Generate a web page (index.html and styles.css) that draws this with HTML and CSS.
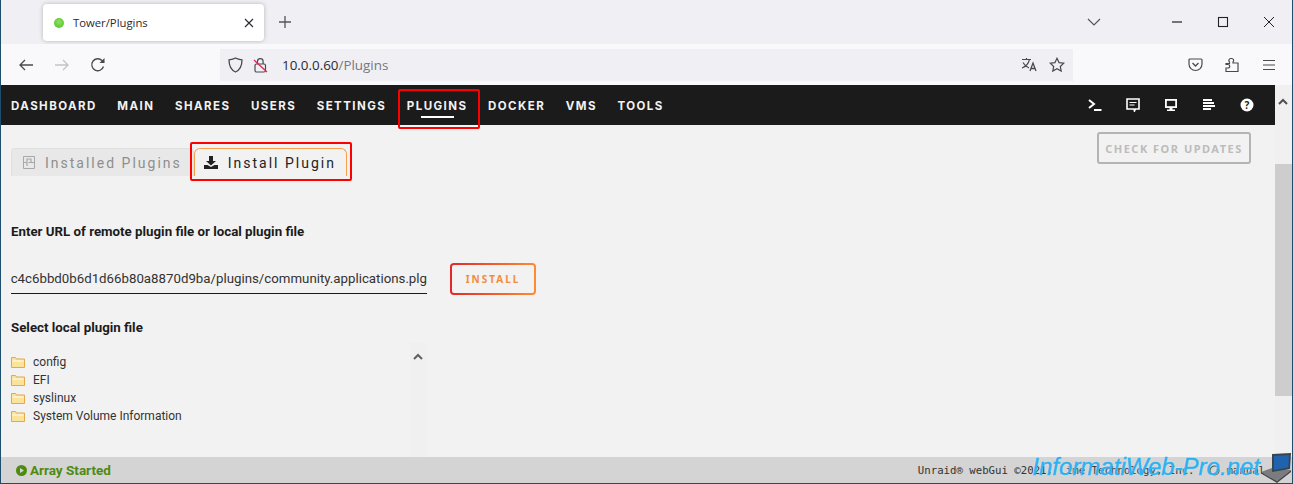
FILE: index.html
```html
<!DOCTYPE html>
<html lang="en">
<head>
    <meta charset="UTF-8">
    <title>Tower/Plugins</title>
    <link rel="stylesheet" href="styles.css">
</head>
<body>
<div class="window">
    <div class="tabstrip">
        <div class="tab">
            <span class="tab-dot"></span>
            <span class="tab-title">Tower/Plugins</span>
            <svg class="tab-close" width="10" height="10" viewBox="0 0 10 10"><path d="M1 1l8 8M9 1l-8 8" stroke="#2b2a33" stroke-width="1.1" fill="none"/></svg>
        </div>
        <svg class="new-tab" width="14" height="14" viewBox="0 0 14 14"><path d="M7 1v12M1 7h12" stroke="#55545c" stroke-width="1.3" fill="none"/></svg>
        <svg class="tab-list" width="14" height="8" viewBox="0 0 14 8"><path d="M1 1l6 6 6-6" stroke="#55545c" stroke-width="1.2" fill="none"/></svg>
        <div class="win-btns">
            <svg width="12" height="12" viewBox="0 0 12 12"><path d="M1 6h10" stroke="#222" stroke-width="1.2"/></svg>
            <svg width="12" height="12" viewBox="0 0 12 12"><rect x="1.5" y="1.5" width="9" height="9" fill="none" stroke="#222" stroke-width="1.1"/></svg>
            <svg width="12" height="12" viewBox="0 0 12 12"><path d="M1 1l10 10M11 1L1 11" stroke="#222" stroke-width="1"/></svg>
        </div>
    </div>
    <div class="toolbar">
        <svg class="tool back" width="16" height="14" viewBox="0 0 16 14"><path d="M15 7H2M7 2L2 7l5 5" stroke="#4a4950" stroke-width="1.3" fill="none"/></svg>
        <svg class="tool forward" width="16" height="14" viewBox="0 0 16 14"><path d="M1 7h13M9 2l5 5-5 5" stroke="#c4c4c8" stroke-width="1.3" fill="none"/></svg>
        <svg class="tool reload" width="16" height="16" viewBox="0 0 16 16"><path d="M13.500 9.500A6 6 0 1 1 12 3.500L14 5.500" stroke="#4a4950" stroke-width="1.300" fill="none"/><path d="M14.500 1v5h-5z" fill="#4a4950"/></svg>
        <div class="urlbar">
            <svg width="15" height="16" viewBox="0 0 15 16"><path d="M7.500 1C5.500 2.300 3.500 2.600 1 2.800c0 5.500 1.500 10 6.500 12.200 5-2.200 6.500-6.700 6.500-12.200C11.500 2.600 9.500 2.300 7.500 1z" stroke="#4a4950" stroke-width="1.300" fill="none"/></svg>
            <svg class="lock" width="15" height="16" viewBox="0 0 15 16"><rect x="2" y="7" width="10.500" height="8" rx="1.500" stroke="#4a4950" stroke-width="1.200" fill="none"/><path d="M4.500 7V4.500a2.800 2.800 0 0 1 5.600 0V7" stroke="#4a4950" stroke-width="1.200" fill="none"/><path d="M1 3l13 12" stroke="#e22850" stroke-width="1.300"/></svg>
            <span class="url"><span class="url-host">10.0.0.60</span>/Plugins</span>
            <svg class="translate" width="17" height="15" viewBox="0 0 17 15"><path d="M1 2.500h9M5.500 1v1.500M2 5.500c1.500 3 3.500 4.500 6 5.500M8.500 2.500c-1 4-3.500 7-7.500 8.500" stroke="#4a4950" stroke-width="1.100" fill="none"/><path d="M9 14l3-8 3 8M10.200 11.500h3.800" stroke="#4a4950" stroke-width="1.300" fill="none"/></svg>
            <svg width="16" height="16" viewBox="0 0 16 16"><path d="M8 1.300l2.050 4.300 4.700.6-3.450 3.250.9 4.650L8 11.800l-4.200 2.300.9-4.650L1.250 6.200l4.700-.6z" stroke="#4a4950" stroke-width="1.200" fill="none"/></svg>
        </div>
        <div class="toolbar-right">
            <svg width="15" height="14" viewBox="0 0 15 14"><path d="M2 1h11a1 1 0 0 1 1 1v4a6.500 6.500 0 0 1-13 0V2a1 1 0 0 1 1-1z" stroke="#4a4950" stroke-width="1.200" fill="none"/><path d="M4.500 5l3 3 3-3" stroke="#4a4950" stroke-width="1.300" fill="none"/></svg>
            <svg width="15" height="16" viewBox="0 0 15 16"><path d="M1 6.500h3.500V5a2 2 0 0 1 1.500-3.500h.5a2 2 0 0 1 1.500 3.500v1H13v8.500H1v-3.500h2a1.500 1.500 0 0 0 0-3.500H1z" stroke="#4a4950" stroke-width="1.200" fill="none"/></svg>
            <svg width="14" height="12" viewBox="0 0 14 12"><path d="M1 1.500h12M1 6h12M1 10.500h12" stroke="#4a4950" stroke-width="1.200" fill="none"/></svg>
        </div>
    </div>
    <div class="viewport">
        <div class="page">
            <nav class="menu">
                <a class="menu-item">DASHBOARD</a>
                <a class="menu-item">MAIN</a>
                <a class="menu-item">SHARES</a>
                <a class="menu-item">USERS</a>
                <a class="menu-item">SETTINGS</a>
                <a class="menu-item active">PLUGINS<span class="mark mark-menu"></span></a>
                <a class="menu-item">DOCKER</a>
                <a class="menu-item">VMS</a>
                <a class="menu-item">TOOLS</a>
                <div class="menu-icons">
                    <svg width="14" height="14" viewBox="0 0 14 14"><path d="M1 2l5 4-5 4" stroke="#fff" stroke-width="2" fill="none"/><path d="M6 12h7.500" stroke="#fff" stroke-width="2"/></svg>
                    <svg width="14" height="14" viewBox="0 0 14 14"><path d="M1 1h12v10H9.500L8.500 13 8 11H1z" fill="none" stroke="#fff" stroke-width="1.600"/><path d="M3.500 4.500h7M3.500 7h5" stroke="#fff" stroke-width="1.200"/></svg>
                    <svg width="14" height="14" viewBox="0 0 14 14"><path d="M1 1h12v9H1z" fill="#fff"/><path d="M2.800 2.800h8.400v5.400H2.800z" fill="#1c1b1b"/><path d="M5.500 10h3v1.500H11V13H3v-1.500h2.500z" fill="#fff"/></svg>
                    <svg width="14" height="14" viewBox="0 0 14 14"><path d="M1 2h9M1 5h11M1 8h12M1 11h8" stroke="#fff" stroke-width="2"/></svg>
                    <svg width="14" height="14" viewBox="0 0 14 14"><circle cx="7" cy="7" r="6.500" fill="#fff"/><text x="7" y="10.500" class="help-mark">?</text></svg>
                </div>
            </nav>
            <div class="tabs-row">
                <div class="page-tab">
                    <svg width="12" height="13" viewBox="0 0 12 13"><path d="M.5.500h11v12H.5z" stroke="#a8a8a8" fill="none"/><path d="M.5 6.500h3M11.500 6.500H8M4 10V3h4v3.500H5.500" stroke="#a8a8a8" stroke-width="1.200" fill="none"/></svg>
                    Installed Plugins
                </div>
                <div class="page-tab current">
                    <svg width="14" height="13" viewBox="0 0 14 13"><path d="M5 0h4v5h3L7 9.500 2 5h3z" fill="#222"/><path d="M0 9h3.500L7 11l3.500-2H14v4H0z" fill="#222"/></svg>
                    Install Plugin
                    <span class="mark mark-tab"></span>
                </div>
                <button class="check-btn">CHECK FOR UPDATES</button>
            </div>
            <div class="content">
                <p class="label">Enter URL of remote plugin file or local plugin file</p>
                <div class="url-row">
                    <div class="url-input"><span>c4c6bbd0b6d1d66b80a8870d9ba/plugins/community.applications.plg</span></div>
                    <button class="install-btn">INSTALL</button>
                </div>
                <p class="label">Select local plugin file</p>
                <div class="file-box">
                    <ul class="file-list">
                        <li><svg class="folder" viewBox="0 0 14 12"><path d="M.5 1.500h4l1 1.500h8v8.500H.500z" fill="#fbe39a" stroke="#e5a94a"/><path d="M1.500 5h11" stroke="#fff" stroke-width="1"/></svg>config</li>
                        <li><svg class="folder" viewBox="0 0 14 12"><path d="M.5 1.500h4l1 1.500h8v8.500H.500z" fill="#fbe39a" stroke="#e5a94a"/><path d="M1.500 5h11" stroke="#fff" stroke-width="1"/></svg>EFI</li>
                        <li><svg class="folder" viewBox="0 0 14 12"><path d="M.5 1.500h4l1 1.500h8v8.500H.500z" fill="#fbe39a" stroke="#e5a94a"/><path d="M1.500 5h11" stroke="#fff" stroke-width="1"/></svg>syslinux</li>
                        <li><svg class="folder" viewBox="0 0 14 12"><path d="M.5 1.500h4l1 1.500h8v8.500H.500z" fill="#fbe39a" stroke="#e5a94a"/><path d="M1.500 5h11" stroke="#fff" stroke-width="1"/></svg>System Volume Information</li>
                    </ul>
                    <div class="file-scroll">
                        <svg width="10" height="7" viewBox="0 0 10 7"><path d="M1 6l4-4 4 4" stroke="#606060" stroke-width="2" fill="none"/></svg>
                    </div>
                </div>
            </div>
        </div>
        <div class="scrollbar">
            <svg width="10" height="7" viewBox="0 0 10 7"><path d="M1 6l4-4 4 4" stroke="#505050" stroke-width="2" fill="none"/></svg>
            <div class="scroll-thumb"></div>
        </div>
    </div>
    <footer class="status">
        <span class="array-state">
            <svg width="11" height="11" viewBox="0 0 11 11"><circle cx="5.500" cy="5.500" r="5.500" fill="#4f8a10"/><path d="M4 3l4 2.500L4 8z" fill="#d4d4d4"/></svg>
            Array Started
        </span>
        <span class="copy">Unraid&reg; webGui &copy;2021, Lime Technology, Inc.
            <svg class="manual-icon" width="11" height="11" viewBox="0 0 11 11"><circle cx="5.500" cy="5.500" r="4.500" fill="none" stroke="#555" stroke-width="1.200"/></svg>
            manual</span>
    </footer>
    <div class="watermark">
        <span>InformatiWeb-Pro.net</span>
        <svg class="laptop" width="32" height="31" viewBox="0 0 32 31"><path d="M1 20l11-4 19 2-14 11z" fill="#7b7c80"/><path d="M1 20l16 9 14-11v2L17 31 1 21.500z" fill="#47484b"/><path d="M12 2l19-1-1 16-18 3z" fill="#3a4450"/><path d="M14 4l15-1-.6 12.500L14 18z" fill="#1f62ad"/></svg>
    </div>
</div>
</body>
</html>
```

FILE: styles.css
```css
* {
    box-sizing: border-box;
}
body {
    margin: 0;
    font-family: "Noto Sans", sans-serif;
    background-color: #f2f2f2;
    overflow: hidden;
}
.window {
    position: relative;
    width: 1293px;
    height: 484px;
    display: flex;
    flex-direction: column;
    border-left: 1px solid #1d4e6e;
    border-right: 1px solid #1d4e6e;
    border-bottom: 1px solid #1d4e6e;
}

/* browser chrome */
.tabstrip {
    height: 44px;
    flex: none;
    display: flex;
    align-items: center;
    background-color: #f0f0f4;
    padding-left: 42px;
}
.tab {
    width: 221px;
    height: 37px;
    margin-top: 1px;
    display: flex;
    align-items: center;
    padding: 0 10px 0 11px;
    background-color: #fff;
    border-radius: 4px;
    box-shadow: 0 0 4px rgba(0, 0, 0, 0.25);
}
.tab-dot {
    width: 10px;
    height: 10px;
    border-radius: 50%;
    background: radial-gradient(circle at 50% 40%, #8fe35d, #4cbb2a);
}
.tab-title {
    flex: 1;
    margin-left: 9px;
    font-family: "Open Sans", sans-serif;
    font-size: 11.3px;
    color: #2b2a33;
}
.new-tab {
    margin-left: 14px;
}
.tab-list {
    margin-left: auto;
}
.win-btns {
    display: flex;
    gap: 34px;
    margin-left: 70px;
    margin-right: 17px;
}
.toolbar {
    height: 41px;
    flex: none;
    display: flex;
    align-items: center;
    background-color: #f9f9fb;
}
.tool.back {
    margin-left: 17px;
}
.tool.forward {
    margin-left: 20px;
}
.tool.reload {
    margin-left: 20px;
}
.urlbar {
    width: 853px;
    height: 32px;
    margin-left: 114px;
    display: flex;
    align-items: center;
    padding: 0 8px;
    background-color: #f0f0f4;
    gap: 7px;
}
.lock {
    margin-left: 3px;
}
.url {
    flex: 1;
    margin-left: 7px;
    font-family: "Open Sans", sans-serif;
    font-size: 13.4px;
    color: #77767c;
}
.url-host {
    color: #2b2a33;
}
.translate {
    margin-right: 4px;
}
.toolbar-right {
    display: flex;
    align-items: center;
    gap: 22px;
    margin-left: 115px;
}
.viewport {
    flex: 1;
    min-height: 0;
    display: flex;
}

/* unraid page */
.page {
    flex: 1;
    display: flex;
    flex-direction: column;
    min-width: 0;
    background-color: #f2f2f2;
}
.menu {
    height: 40px;
    flex: none;
    display: flex;
    align-items: center;
    gap: 20.5px;
    padding: 2px 0 0 10px;
    background-color: #1c1b1b;
}
.menu-item {
    position: relative;
    font-family: "Inter", sans-serif;
    font-size: 11.5px;
    font-weight: 700;
    letter-spacing: 1.45px;
    color: #f2f2f2;
}
.menu-item.active::after {
    content: "";
    position: absolute;
    left: 14px;
    right: 14px;
    bottom: -5px;
    height: 2px;
    background-color: #fff;
}
.menu-icons {
    display: flex;
    align-items: center;
    gap: 24px;
    margin-left: auto;
    margin-right: 21px;
    margin-top: -2px;
}
.help-mark {
    font-family: "Noto Sans", sans-serif;
    font-size: 10px;
    font-weight: 700;
    text-anchor: middle;
    fill: #1c1b1b;
}
.mark {
    position: absolute;
    border: 2px solid #f00;
    border-radius: 2px;
}
.mark-menu {
    left: -9px;
    top: -10px;
    width: 82px;
    height: 40px;
}
.mark-tab {
    left: -5px;
    top: -7px;
    width: 162px;
    height: 39px;
}
.tabs-row {
    display: flex;
    align-items: flex-start;
    padding: 8px 24px 0 10px;
    height: 70px;
    flex: none;
}
.page-tab {
    position: relative;
    height: 28px;
    margin-top: 15px;
    display: flex;
    align-items: center;
    gap: 10px;
    padding: 0 11px;
    font-family: "Roboto", sans-serif;
    font-size: 14px;
    letter-spacing: 2px;
    color: #8e8e8e;
    background-color: #e8e8e8;
    border: 1px solid #e0e0e0;
    border-bottom: 0;
    border-radius: 4px 4px 0 0;
}
.page-tab.current {
    margin-left: 0;
    color: #222;
    background-color: #f2f2f2;
    border-color: #f6a04d;
    border-radius: 6px 6px 0 0;
    padding: 0 10px 0 9px;
}
.check-btn {
    margin-left: auto;
    margin-top: -1px;
    width: 154px;
    height: 32px;
    font-family: "Noto Sans", sans-serif;
    font-size: 11px;
    font-weight: 700;
    letter-spacing: 1.5px;
    color: #bcbcbc;
    background: none;
    border: 2px solid #b4b4b4;
    border-radius: 3px;
    padding: 0;
}
.content {
    flex: 1;
    padding: 28px 0 0 10px;
}
.label {
    margin: 0;
    font-family: "Roboto", sans-serif;
    font-size: 13.3px;
    font-weight: 700;
    line-height: 18px;
    color: #1c1b1b;
}
.url-row {
    display: flex;
    align-items: center;
    gap: 23px;
    margin: 22px 0 24px;
}
.url-input {
    width: 416px;
    height: 30px;
    direction: rtl;
    white-space: nowrap;
    display: flex;
    align-items: center;
    border-bottom: 1px solid #1c1b1b;
    font-family: "Roboto", sans-serif;
    font-size: 13.27px;
    color: #333;
}
.url-input span {
    direction: ltr;
}
.install-btn {
    width: 86px;
    height: 32px;
    font-family: "Noto Sans", sans-serif;
    font-size: 10px;
    font-weight: 700;
    letter-spacing: 2px;
    color: #f28c3c;
    background: linear-gradient(#f2f2f2, #f2f2f2) padding-box, linear-gradient(90deg, #e22828, #ff8c2f) border-box;
    border: 2px solid transparent;
    border-radius: 4px;
    padding: 0;
}
.file-box {
    display: flex;
    width: 416px;
    margin-top: 6px;
}
.file-list {
    flex: 1;
    list-style-type: none;
    margin: 0;
    padding: 10px 0 0;
}
.file-list li {
    display: flex;
    align-items: center;
    gap: 8px;
    height: 18px;
    font-family: "Roboto", sans-serif;
    font-size: 12px;
    color: #333;
}
.folder {
    width: 14px;
    height: 12px;
}
.file-scroll {
    width: 17px;
    height: 115px;
    padding: 0 0 0 3px;
    background-color: #f0f0f0;
}
.status {
    height: 26px;
    flex: none;
    display: flex;
    align-items: center;
    justify-content: space-between;
    padding: 0 27px 0 15px;
    background-color: #d4d4d4;
}
.array-state {
    display: flex;
    align-items: center;
    gap: 3px;
    font-family: "Roboto", sans-serif;
    font-size: 13.5px;
    font-weight: 700;
    color: #4f8a10;
}
.copy {
    font-family: "DejaVu Sans Mono", monospace;
    font-size: 10.7px;
    color: #333;
}
.manual-icon {
    vertical-align: -2px;
    margin-left: 8px;
}
.scrollbar {
    width: 17px;
    flex: none;
    padding: 3px 0 0 3px;
    background-color: #f0f0f0;
    position: relative;
}
.scroll-thumb {
    position: absolute;
    left: 0;
    right: 0;
    top: 79px;
    height: 232px;
    background-color: #cdcdcd;
}
.watermark {
    position: absolute;
    right: 0;
    bottom: 0;
    display: flex;
    align-items: flex-end;
}
.watermark span {
    font-family: "Liberation Sans", sans-serif;
    font-size: 24px;
    font-style: italic;
    line-height: 27px;
    margin-bottom: 3px;
    color: #2cb2f2;
    -webkit-text-stroke: 0.4px #2cb2f2;
    text-shadow: 0 0 2px rgba(255, 255, 255, 0.6);
}
```
